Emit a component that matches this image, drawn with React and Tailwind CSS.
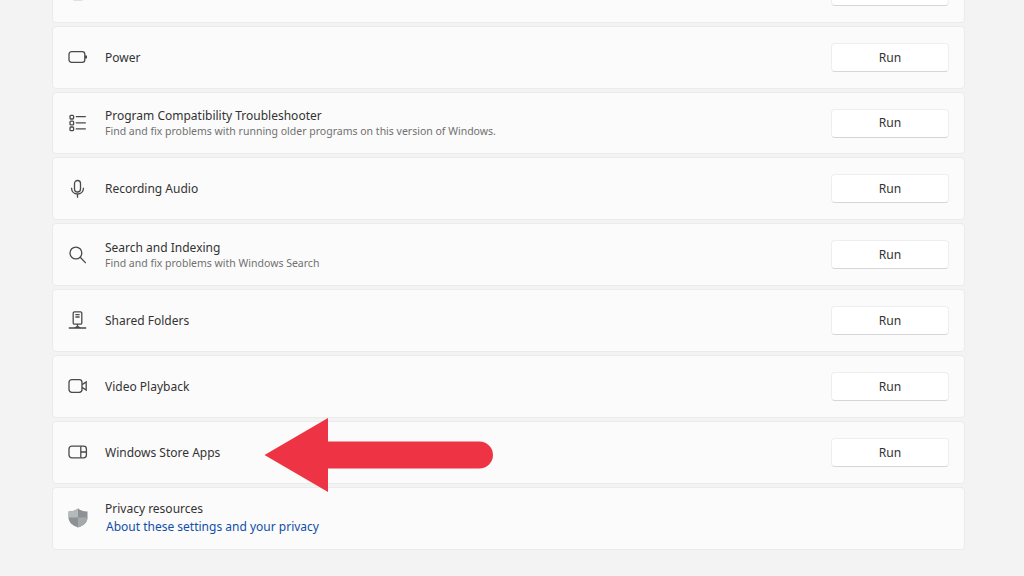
import React from 'react';

const stroke = { fill: 'none', stroke: '#4a4a4a', strokeWidth: 1.3 };

function Svg({ children }) {
  return (
    <svg width="20" height="20" viewBox="0 0 20 20" {...stroke}>
      {children}
    </svg>
  );
}

// only the foot of this icon shows above the fold
const TopIcon = () => (
  <Svg>
    <rect x="6" y="2" width="8" height="12" rx="1" />
    <path d="M5.500 18.500h9" />
  </Svg>
);
const PowerIcon = () => (
  <Svg>
    <rect x="1" y="4.700" width="15.800" height="10.600" rx="2.600" />
    <path d="M18 8.600v2.800" strokeWidth="2" />
  </Svg>
);
const ListIcon = () => (
  <Svg>
    <rect x="2" y="2.400" width="3.600" height="3.600" rx="0.900" />
    <rect x="2" y="8.200" width="3.600" height="3.600" rx="0.900" />
    <rect x="2" y="14" width="3.600" height="3.600" rx="0.900" />
    <path d="M7.800 3.600h10M7.800 9.800h10M7.800 15.800h10" />
  </Svg>
);
const MicIcon = () => (
  <Svg>
    <rect x="6.500" y="1.500" width="6" height="11.500" rx="3" />
    <path d="M3.500 8.800c0 3.800 2.600 6.200 6 6.200s6-2.400 6-6.200M9.500 15v3.800" />
  </Svg>
);
const SearchIcon = () => (
  <Svg>
    <circle cx="7.900" cy="8" r="5.900" />
    <path d="M12.200 12.300l5.600 5.800" />
  </Svg>
);
const SharedIcon = () => (
  <Svg>
    <rect x="5.200" y="0.800" width="8.600" height="12.400" rx="1.300" />
    <path d="M7.400 3.600h4.200M7.400 6h4.200M9.500 13.200v2.600M0.800 17h17.400" />
    <path d="M6 17l2.200-1.800h2.600L13 17z" fill="#4a4a4a" stroke="none" />
  </Svg>
);
const VideoIcon = () => (
  <Svg>
    <rect x="1" y="3.600" width="13" height="12.800" rx="2.800" />
    <path d="M14 8.600l4.200-2.700v8.200l-4.200-2.700" />
  </Svg>
);
const StoreIcon = () => (
  <Svg>
    <rect x="1" y="4.200" width="17.400" height="11.600" rx="2.800" />
    <path d="M12.800 4.200v11.600M12.800 10h5.600" />
  </Svg>
);
const ShieldIcon = () => (
  <svg width="20" height="20" viewBox="0 0 20 20">
    <path d="M10 .5c2.500 1.900 5.400 2.900 9.500 3v5.800c0 4.900-3.500 8.100-9.500 10.200C4 17.400.5 14.200.5 9.300V3.500C4.600 3.400 7.500 2.400 10 .5z" fill="#8b9194" />
    <path d="M10 .5C7.500 2.400 4.600 3.400.5 3.500v5.900H10z" fill="#b4b9bb" />
    <path d="M10 9.400h9.500c0 5-3.500 8-9.500 10.100z" fill="#a4a9ac" />
  </svg>
);

const rows = [
  { icon: TopIcon, title: '' },
  { icon: PowerIcon, title: 'Power', run: true },
  { icon: ListIcon, title: 'Program Compatibility Troubleshooter', desc: 'Find and fix problems with running older programs on this version of Windows.', run: true },
  { icon: MicIcon, title: 'Recording Audio', run: true },
  { icon: SearchIcon, title: 'Search and Indexing', desc: 'Find and fix problems with Windows Search', run: true },
  { icon: SharedIcon, title: 'Shared Folders', run: true },
  { icon: VideoIcon, title: 'Video Playback', run: true },
  { icon: StoreIcon, title: 'Windows Store Apps', run: true },
];

function Row({ icon: Icon, title, desc, run }) {
  return (
    <div className="flex h-[62.83px] shrink-0 items-center rounded-[4px] border border-[#ebebeb] bg-[#fbfbfb] pl-[15px] pr-[15px]">
      <Icon />
      <div className="ml-[17px] flex-1 pt-[1px]">
        <p className="text-[12px] leading-[16px] text-[#333333]">{title}</p>
        {desc && <p className="text-[10.5px] leading-[15px] text-[#707070]">{desc}</p>}
      </div>
      <button className="h-[29px] w-[118px] rounded-[4px] border border-[#eeeeee] border-b-[#d6d6d6] bg-white pt-[1px] text-[12.1px] text-[#333333]">
        {run && 'Run'}
      </button>
    </div>
  );
}

export default function App() {
  return (
    <div className="relative h-[576px] w-[1024px] overflow-hidden bg-[#f3f3f3] font-['Noto_Sans','Open_Sans',sans-serif]">
      <div className="-mt-[40px] ml-[52px] flex w-[913px] flex-col gap-[3px]">
        {rows.map((row, i) => (
          <Row key={i} {...row} />
        ))}
        {/* Privacy */}
        <div className="flex h-[63px] shrink-0 items-center rounded-[4px] border border-[#ebebeb] bg-[#fbfbfb] pl-[15px]">
          <ShieldIcon />
          <div className="ml-[18px]">
            <p className="-ml-[1px] text-[12px] leading-[18px] text-[#333333]">Privacy resources</p>
            <a className="block text-[12px] leading-[18px] text-[#0f4fa8]">About these settings and your privacy</a>
          </div>
        </div>
      </div>

      {/* Arrow annotation */}
      <svg className="absolute left-[260px] top-[414px]" width="240" height="82" viewBox="0 0 240 82">
        <path d="M4.500 41L68 4v23.500h151.500a13.500 13.500 0 0 1 0 27H68V78z" fill="#ee3345" />
      </svg>
    </div>
  );
}
